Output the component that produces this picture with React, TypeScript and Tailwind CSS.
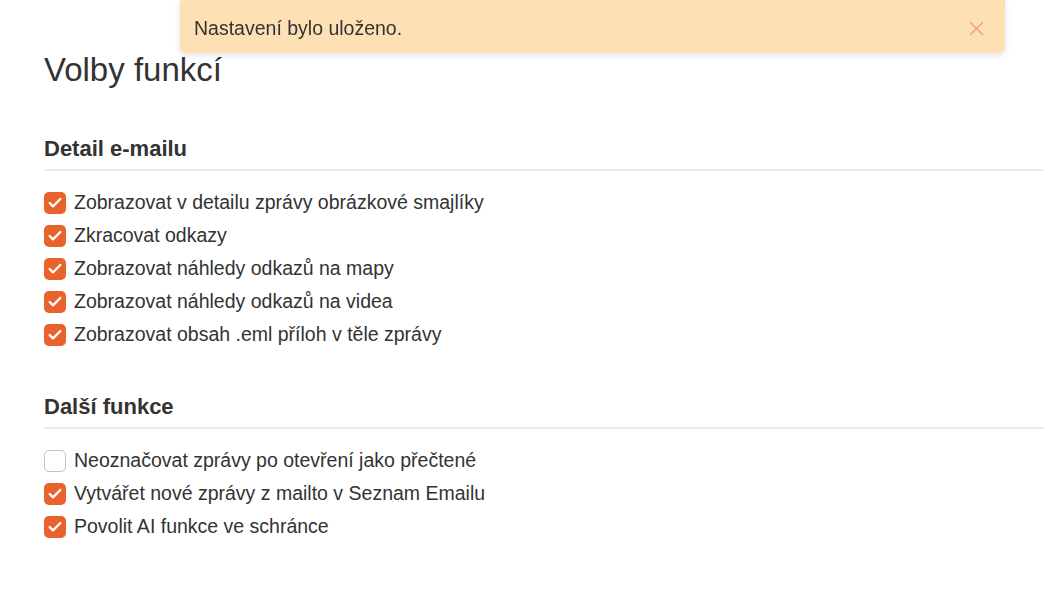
import { X, Check } from 'lucide-react'

type Option = { label: string; checked: boolean }

const emailOptions: Option[] = [
  { label: 'Zobrazovat v detailu zprávy obrázkové smajlíky', checked: true },
  { label: 'Zkracovat odkazy', checked: true },
  { label: 'Zobrazovat náhledy odkazů na mapy', checked: true },
  { label: 'Zobrazovat náhledy odkazů na videa', checked: true },
  { label: 'Zobrazovat obsah .eml příloh v těle zprávy', checked: true },
]

const otherOptions: Option[] = [
  { label: 'Neoznačovat zprávy po otevření jako přečtené', checked: false },
  { label: 'Vytvářet nové zprávy z mailto v Seznam Emailu', checked: true },
  { label: 'Povolit AI funkce ve schránce', checked: true },
]

function CheckRow({ label, checked }: Option) {
  return (
    <label className="flex h-[33px] items-center gap-[8px]">
      {checked ? (
        <span className="flex h-[22px] w-[22px] items-center justify-center rounded-[5px] bg-[#e8622b]">
          <Check size={16} strokeWidth={3.5} className="text-white" />
        </span>
      ) : (
        <span className="h-[22px] w-[22px] rounded-[5px] border border-[#c4c4c4] bg-white" />
      )}
      <span className="text-[19.5px] leading-none text-[#333]">{label}</span>
    </label>
  )
}

function Section({ title, options }: { title: string; options: Option[] }) {
  return (
    <section>
      <h2 className="border-b-2 border-[#ebebeb] pb-[7px] text-[22px] leading-[26px] font-bold text-[#333]">
        {title}
      </h2>
      <div className="mt-[15px]">
        {options.map((o) => (
          <CheckRow key={o.label} {...o} />
        ))}
      </div>
    </section>
  )
}

export default function App() {
  return (
    <div className="relative min-h-[601px] bg-white pl-[44px] font-['Liberation_Sans',Arial,sans-serif]">
      <div className="fixed top-0 left-[180px] flex h-[53px] w-[825px] items-center justify-between rounded-b-[6px] bg-[#fde0b3] pt-[4px] pr-[17px] pl-[14px] shadow-[0_2px_6px_rgba(0,0,0,0.12)]">
        <span className="text-[19.5px] text-[#333]">Nastavení bylo uloženo.</span>
        <X size={23} strokeWidth={1.75} className="text-[#f5a57b]" />
      </div>

      <div className="pt-[52px]">
        <h1 className="text-[33px] leading-[36px] font-normal text-[#333]">Volby funkcí</h1>
      </div>

      <div className="mt-[48px]">
        <Section title="Detail e-mailu" options={emailOptions} />
      </div>

      <div className="mt-[43px]">
        <Section title="Další funkce" options={otherOptions} />
      </div>
    </div>
  )
}
